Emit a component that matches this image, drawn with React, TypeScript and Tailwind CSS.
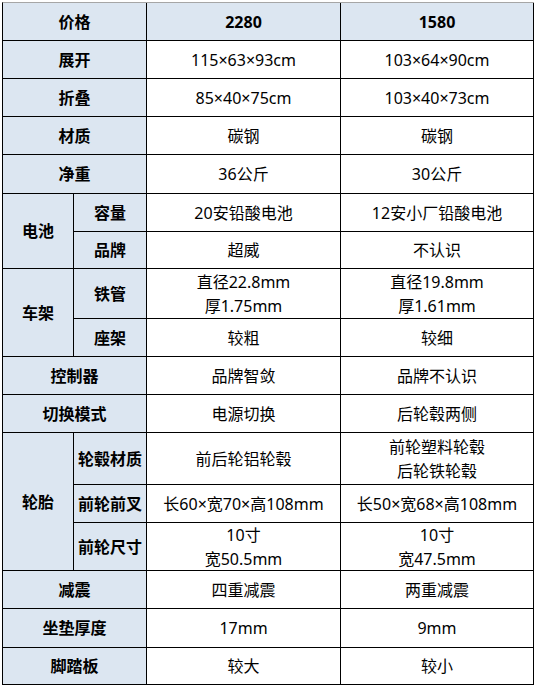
import React from "react";

const F = { fontFamily: "'Noto Sans','Noto Sans CJK SC',sans-serif" };

function Cell({
  children,
  className = "",
}: {
  children?: React.ReactNode;
  className?: string;
}) {
  return (
    <div
      className={
        "border-r border-b border-black flex flex-col items-center justify-center text-center leading-[24px] " +
        className
      }
    >
      {children}
    </div>
  );
}

const H = "bg-[#dce6f1] font-bold text-[16px]";
const D = "bg-white text-[16px]";

export default function App() {
  return (
    <div className="bg-white w-[536px] h-[687px] pl-[2px] pt-[2px] text-black" style={F}>
      <div className="grid grid-cols-[71px_73px_194px_193px] grid-rows-[38px_38px_38px_38px_39px_38px_37px_50px_38px_38px_38px_52px_38px_48px_38px_39px_37px] border-l border-t border-l-black border-t-[#a6a6a6] w-[532px]">
        {/* header */}
        <Cell className={H + " col-span-2"}>价格</Cell>
        <Cell className={H}>2280</Cell>
        <Cell className={H}>1580</Cell>

        <Cell className={H + " col-span-2"}>展开</Cell>
        <Cell className={D}>115×63×93cm</Cell>
        <Cell className={D}>103×64×90cm</Cell>

        <Cell className={H + " col-span-2"}>折叠</Cell>
        <Cell className={D}>85×40×75cm</Cell>
        <Cell className={D}>103×40×73cm</Cell>

        <Cell className={H + " col-span-2"}>材质</Cell>
        <Cell className={D}>碳钢</Cell>
        <Cell className={D}>碳钢</Cell>

        <Cell className={H + " col-span-2"}>净重</Cell>
        <Cell className={D}>36公斤</Cell>
        <Cell className={D}>30公斤</Cell>

        {/* 电池 */}
        <Cell className={H + " row-span-2"}>电池</Cell>
        <Cell className={H}>容量</Cell>
        <Cell className={D}>20安铅酸电池</Cell>
        <Cell className={D}>12安小厂铅酸电池</Cell>

        <Cell className={H}>品牌</Cell>
        <Cell className={D}>超威</Cell>
        <Cell className={D}>不认识</Cell>

        {/* 车架 */}
        <Cell className={H + " row-span-2"}>车架</Cell>
        <Cell className={H}>铁管</Cell>
        <Cell className={D}>
          <span>直径22.8mm</span>
          <span>厚1.75mm</span>
        </Cell>
        <Cell className={D}>
          <span>直径19.8mm</span>
          <span>厚1.61mm</span>
        </Cell>

        <Cell className={H}>座架</Cell>
        <Cell className={D}>较粗</Cell>
        <Cell className={D}>较细</Cell>

        <Cell className={H + " col-span-2"}>控制器</Cell>
        <Cell className={D}>品牌智敛</Cell>
        <Cell className={D}>品牌不认识</Cell>

        <Cell className={H + " col-span-2"}>切换模式</Cell>
        <Cell className={D}>电源切换</Cell>
        <Cell className={D}>后轮毂两侧</Cell>

        {/* 轮胎 */}
        <Cell className={H + " row-span-3"}>轮胎</Cell>
        <Cell className={H}>轮毂材质</Cell>
        <Cell className={D}>前后轮铝轮毂</Cell>
        <Cell className={D}>
          <span>前轮塑料轮毂</span>
          <span>后轮铁轮毂</span>
        </Cell>

        <Cell className={H}>前轮前叉</Cell>
        <Cell className={D}>长60×宽70×高108mm</Cell>
        <Cell className={D}>长50×宽68×高108mm</Cell>

        <Cell className={H}>前轮尺寸</Cell>
        <Cell className={D}>
          <span>10寸</span>
          <span>宽50.5mm</span>
        </Cell>
        <Cell className={D}>
          <span>10寸</span>
          <span>宽47.5mm</span>
        </Cell>

        <Cell className={H + " col-span-2"}>减震</Cell>
        <Cell className={D}>四重减震</Cell>
        <Cell className={D}>两重减震</Cell>

        <Cell className={H + " col-span-2"}>坐垫厚度</Cell>
        <Cell className={D}>17mm</Cell>
        <Cell className={D}>9mm</Cell>

        <Cell className={H + " col-span-2"}>脚踏板</Cell>
        <Cell className={D}>较大</Cell>
        <Cell className={D}>较小</Cell>
      </div>
    </div>
  );
}
